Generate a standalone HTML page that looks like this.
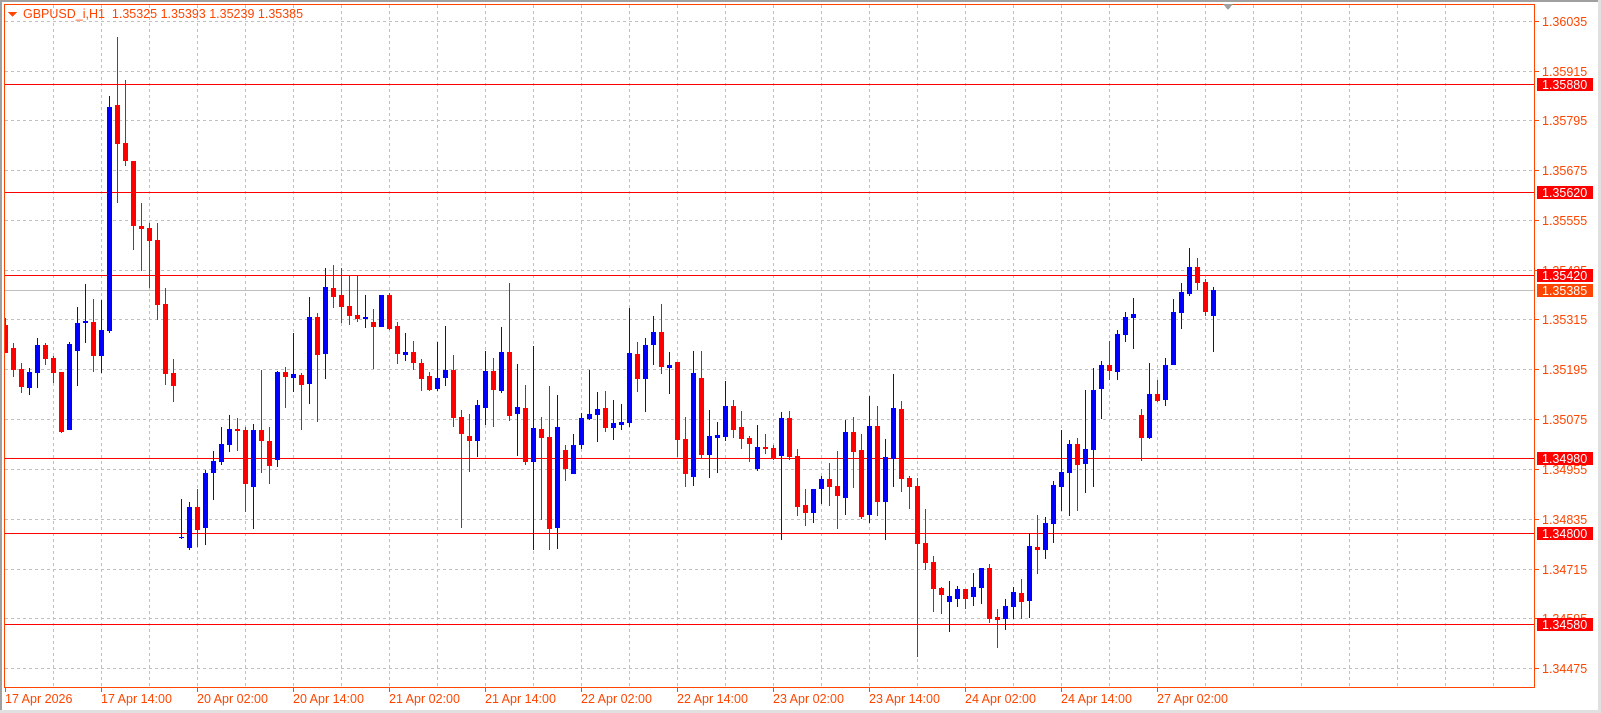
<!DOCTYPE html>
<html><head><meta charset="utf-8">
<style>
html,body{margin:0;padding:0;background:#fff;}
body{width:1601px;height:713px;overflow:hidden;position:relative;}
svg{position:absolute;left:0;top:0;}
text{font-family:"Liberation Sans",sans-serif;font-size:12.5px;}
</style></head><body>
<svg id="s" width="1601" height="713" viewBox="0 0 1601 713" xmlns="http://www.w3.org/2000/svg" shape-rendering="crispEdges">
<rect x="0" y="0" width="1601" height="713" fill="#fff"/>
<rect x="0" y="0" width="1601" height="2" fill="#a0a0a0"/>
<rect x="0" y="0" width="2" height="713" fill="#a0a0a0"/>
<rect x="1598" y="0" width="3" height="713" fill="#e0e0e0"/>
<rect x="0" y="710" width="1601" height="3" fill="#e0e0e0"/>
<g id="grid" stroke="#c0c0c0" stroke-width="1" stroke-dasharray="3,3"></g>
<g id="lv"></g>
<g id="cd"></g>
<rect x="4.5" y="4.5" width="1530" height="683" fill="none" stroke="#ff4500" stroke-width="1"/>
<polygon points="1223,4 1233,4 1228,10" fill="#a0a0a0"/>
<polygon points="8,12 17,12 12.5,17" fill="#ff4500"/>
<text x="23" y="18" fill="#ff4500" xml:space="preserve">GBPUSD_i,H1  1.35325 1.35393 1.35239 1.35385</text>
<g id="ax" fill="#ff4500"></g>
</svg>
<script>
var NS="http://www.w3.org/2000/svg";
function el(p,t,a,txt){var e=document.createElementNS(NS,t);for(var k in a)e.setAttribute(k,a[k]);if(txt!==undefined)e.textContent=txt;document.getElementById(p).appendChild(e);return e;}
for(var k=1;k<=31;k++){var x=5+48*k+0.5;el('grid','line',{x1:x,y1:5,x2:x,y2:687});}
var labs=["1.36035","1.35915","1.35795","1.35675","1.35555","1.35435","1.35315","1.35195","1.35075","1.34955","1.34835","1.34715","1.34595","1.34475"];
for(var k=0;k<14;k++){var y=Math.round(20.7+49.8*k)+0.5;el('grid','line',{x1:5,y1:y,x2:1534,y2:y});
 el('ax','rect',{x:1535,y:y-0.5,width:4,height:1});
 el('ax','text',{x:1542,y:y+4.5},labs[k]);}
var dates=["17 Apr 2026","17 Apr 14:00","20 Apr 02:00","20 Apr 14:00","21 Apr 02:00","21 Apr 14:00","22 Apr 02:00","22 Apr 14:00","23 Apr 02:00","23 Apr 14:00","24 Apr 02:00","24 Apr 14:00","27 Apr 02:00"];
for(var k=0;k<dates.length;k++){var x=5+96*k;el('ax','rect',{x:x,y:687,width:1,height:5});el('ax','text',{x:x,y:703},dates[k]);}
el('lv','rect',{x:5,y:290,width:1530,height:1,fill:"#c0c0c0"});
var lv=[[84,"1.35880"],[192,"1.35620"],[275,"1.35420"],[458,"1.34980"],[533,"1.34800"],[624,"1.34580"]];
lv.forEach(function(l){el('lv','rect',{x:5,y:l[0],width:1530,height:1,fill:"#ff0000"});});
var d=[
[318,353,325,353,'r'],[343,377,348,370,'r'],[363,393,369,387,'r'],[368,395,372,388,'b'],[338,388,345,373,'b'],
[343,365,345,359,'r'],[356,383,358,373,'r'],[372,433,372,432,'r'],[342,430,344,430,'b'],[307,386,323,351,'b'],
[284,343,321,323,'b'],[299,372,322,356,'r'],[300,373,330,356,'b'],[96,333,107,331,'b'],[37,203,105,144,'r'],
[80,166,143,161,'r'],[161,250,161,226,'r'],[203,271,226,229,'r'],[223,288,228,241,'r'],[223,320,240,305,'r'],
[288,385,304,374,'r'],[359,402,373,386,'r'],[499,539,537,538,'b'],[502,550,507,548,'b'],[489,547,507,530,'r'],
[470,545,473,528,'b'],[451,500,461,473,'b'],[427,465,444,462,'b'],[415,452,429,445,'b'],[418,451,429,431,'r'],
[427,512,430,484,'r'],[424,529,430,487,'b'],[370,473,430,441,'r'],[427,484,441,466,'r'],[371,467,372,460,'b'],
[367,408,372,377,'r'],[333,392,374,378,'b'],[373,430,375,385,'r'],[297,404,317,384,'b'],[313,422,317,355,'r'],
[268,379,287,354,'b'],[265,308,288,297,'r'],[268,323,295,307,'r'],[276,325,306,316,'r'],[276,322,315,319,'r'],
[295,328,317,319,'b'],[309,369,322,327,'r'],[295,327,295,327,'b'],[293,330,295,329,'r'],[322,364,326,354,'r'],
[333,361,352,355,'b'],[341,370,352,363,'r'],[359,391,363,379,'r'],[372,391,376,390,'r'],[342,391,378,389,'b'],
[326,386,370,378,'b'],[355,427,370,418,'r'],[410,528,417,434,'r'],[414,472,436,441,'r'],[400,457,405,441,'b'],
[351,425,371,408,'b'],[358,427,371,390,'r'],[327,393,352,391,'b'],[283,421,352,416,'r'],[364,456,407,414,'b'],
[385,465,408,462,'r'],[346,550,428,462,'b'],[417,520,429,438,'r'],[386,550,437,529,'r'],[395,549,427,528,'b'],
[445,481,450,469,'r'],[434,474,445,474,'b'],[413,449,418,445,'b'],[370,420,414,419,'b'],[392,442,409,415,'b'],
[391,432,408,428,'r'],[400,440,423,428,'b'],[404,430,422,425,'b'],[308,427,353,423,'b'],[342,392,354,379,'r'],
[338,412,345,379,'b'],[316,365,332,345,'b'],[304,374,332,367,'r'],[352,394,365,368,'b'],[362,457,362,440,'r'],
[417,487,439,474,'r'],[351,486,373,477,'b'],[351,459,378,455,'r'],[410,478,436,455,'b'],[422,473,435,438,'b'],
[381,441,406,437,'b'],[400,438,406,430,'r'],[411,449,427,439,'r'],[436,462,438,444,'r'],[425,471,447,469,'b'],
[434,454,447,449,'r'],[445,460,448,459,'r'],[412,540,418,456,'b'],[411,460,418,457,'r'],[449,516,456,507,'r'],
[489,526,505,513,'r'],[489,523,489,513,'b'],[476,504,479,489,'b'],[463,506,479,487,'r'],[451,529,486,496,'r'],
[420,515,432,498,'b'],[417,488,432,452,'r'],[434,519,450,517,'r'],[396,523,426,515,'b'],[406,516,426,502,'r'],
[439,540,457,502,'b'],[374,487,408,459,'b'],[401,492,409,479,'r'],[476,509,478,487,'r'],[478,657,486,544,'r'],
[509,570,543,563,'r'],[556,612,562,589,'r'],[587,614,588,595,'r'],[581,632,596,602,'b'],[586,607,589,599,'b'],
[589,609,589,599,'r'],[573,606,587,597,'b'],[568,604,568,588,'b'],[564,623,568,619,'r'],[609,648,617,620,'r'],
[599,630,606,619,'b'],[587,619,592,607,'b'],[579,619,593,602,'r'],[533,618,546,601,'b'],[515,574,547,550,'r'],
[517,559,523,550,'b'],[481,543,485,524,'b'],[430,511,472,487,'b'],[440,516,444,473,'b'],[438,511,444,465,'r'],
[390,493,449,464,'b'],[368,487,390,450,'b'],[361,419,365,389,'b'],[341,380,365,371,'r'],[330,380,334,372,'b'],
[312,342,317,335,'b'],[298,349,314,318,'b'],[409,461,415,438,'r'],[363,439,394,438,'b'],[380,402,394,401,'r'],
[358,406,365,400,'b'],[299,365,312,365,'b'],[283,329,292,313,'b'],[248,296,267,294,'b'],[258,290,267,283,'r'],
[279,316,282,312,'r'],[287,352,290,316,'b']
];
d.forEach(function(c,i){var x=5+8*i;var col=c[4]=='b'?"#0000ff":"#ff0000";
 var lo=Math.max(c[0],5);
 el('cd','rect',{x:x,y:lo,width:1,height:Math.max(c[1]-lo,1),fill:col});
 var bx=x-2,bw=5;if(bx<5){bw-=5-bx;bx=5;}
 el('cd','rect',{x:bx,y:c[2],width:bw,height:Math.max(c[3]-c[2],1),fill:col});});
lv.forEach(function(l){el('ax','rect',{x:1537,y:l[0]-6,width:56,height:13,fill:"#ff0000"});
 el('ax','text',{x:1542,y:l[0]+5,fill:"#fff"},l[1]);});
el('ax','rect',{x:1537,y:284,width:56,height:13,fill:"#ff4500"});
el('ax','text',{x:1542,y:295,fill:"#fff"},"1.35385");
</script>
</body></html>
